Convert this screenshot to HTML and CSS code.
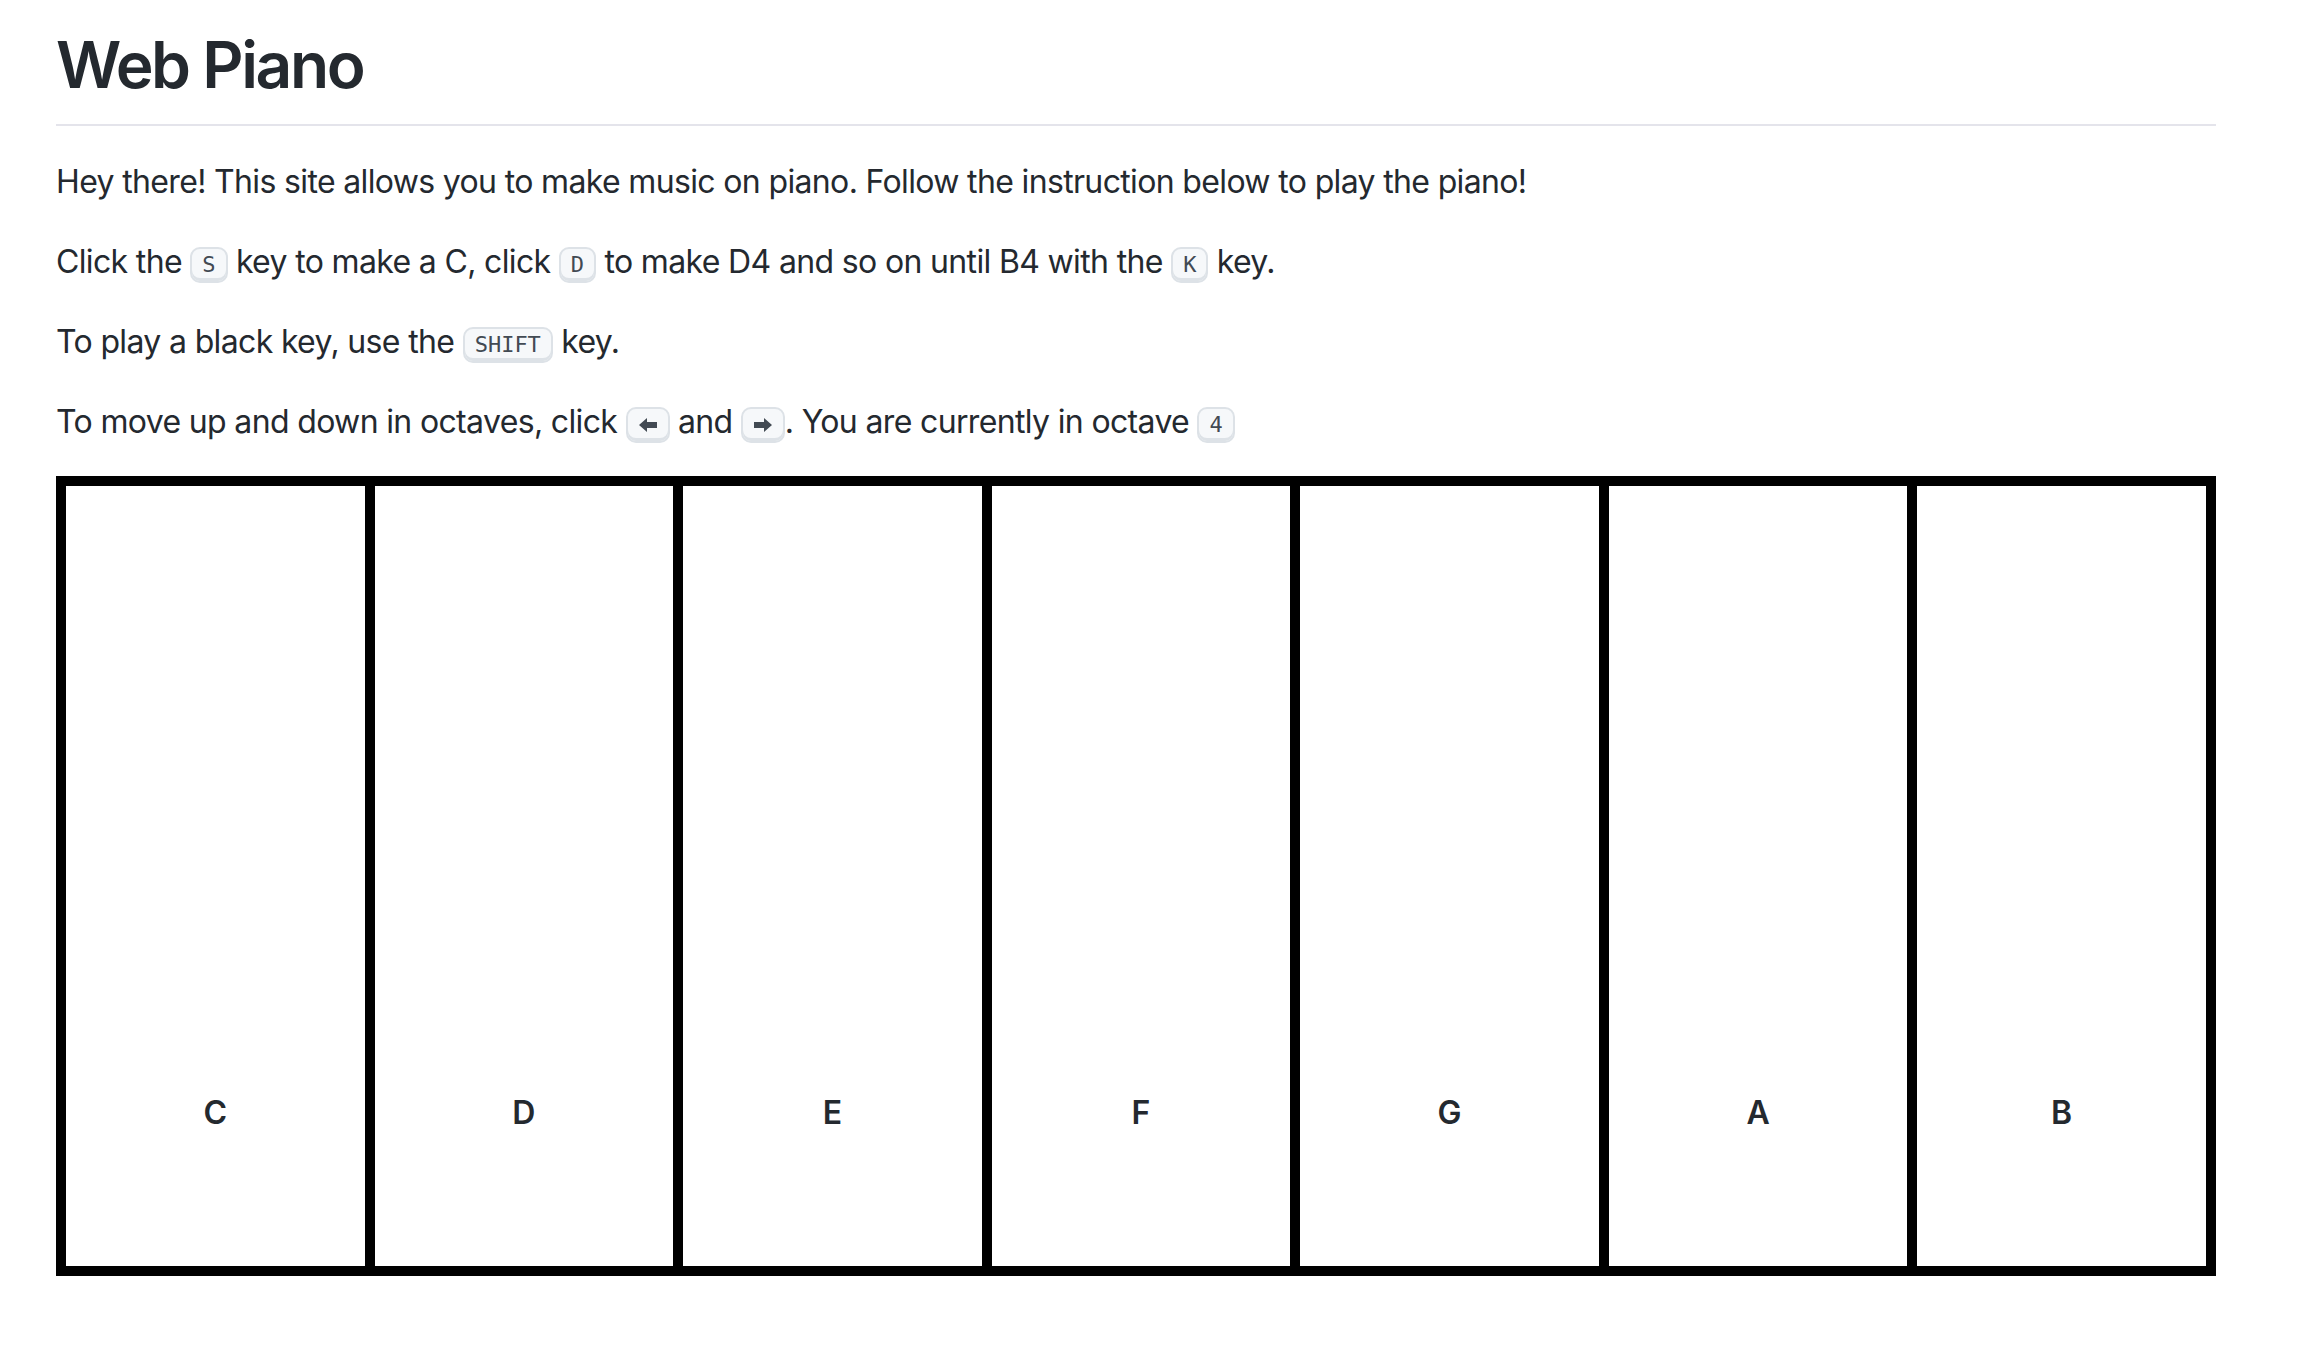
FILE: index.html
```html
<!DOCTYPE html>
<html lang="en">
<head>
<meta charset="utf-8">
<title>Web Piano</title>
<link rel="stylesheet" href="styles.css">
</head>
<body>
<main class="page">
  <h1 class="title">Web Piano</h1>
  <p class="para">Hey there! This site allows you to make music on piano. Follow the instruction below to play the piano!</p>
  <p class="para">Click the <kbd class="kbd">S</kbd> key to make a C, click <kbd class="kbd">D</kbd> to make D4 and so on until B4 with the <kbd class="kbd">K</kbd> key.</p>
  <p class="para">To play a black key, use the <kbd class="kbd">SHIFT</kbd> key.</p>
  <p class="para para-last">To move up and down in octaves, click <kbd class="kbd kbd-icon"><svg class="arrow" viewBox="0 0 22 20" width="22" height="20"><path d="M2 10 L10 3 L10 7 L20 7 L20 13 L10 13 L10 17 Z"/></svg></kbd> and <kbd class="kbd kbd-icon"><svg class="arrow" viewBox="0 0 22 20" width="22" height="20"><path d="M20 10 L12 3 L12 7 L2 7 L2 13 L12 13 L12 17 Z"/></svg></kbd>. You are currently in octave <kbd class="kbd">4</kbd></p>
  <div class="piano">
    <div class="key"><span class="label">C</span></div>
    <div class="key"><span class="label">D</span></div>
    <div class="key"><span class="label">E</span></div>
    <div class="key"><span class="label">F</span></div>
    <div class="key"><span class="label">G</span></div>
    <div class="key"><span class="label">A</span></div>
    <div class="key key-last"><span class="label">B</span></div>
  </div>
</main>
</body>
</html>
```
FILE: styles.css
```css
html, body {
  margin: 0;
  padding: 0;
  background: #ffffff;
}

body {
  font-family: Inter, "Liberation Sans", Arial, sans-serif;
  font-size: 32px;
  line-height: 48px;
  color: #24292f;
  letter-spacing: -0.65px;
}

.page {
  padding: 25px 82px 40px 56px;
}

.title {
  margin: 0 0 32px 0;
  font-size: 64px;
  line-height: 80px;
  font-weight: 600;
  padding-bottom: 19px;
  border-bottom: 2px solid #e4e4eb;
  letter-spacing: -2.4px;
}

.para {
  margin: 0 0 32px 0;
}

.para-last {
  margin-bottom: 30px;
}

.kbd {
  display: inline-block;
  font-family: "DejaVu Sans Mono", "Liberation Mono", monospace;
  font-size: 22px;
  line-height: 20px;
  letter-spacing: 0;
  padding: 6px 10px;
  color: #424a53;
  background: #f6f8fa;
  border: 2px solid #dde2e7;
  border-radius: 10px;
  box-shadow: inset 0 -3px 0 #dde2e7;
  vertical-align: middle;
  position: relative;
  top: 1px;
}

.kbd-icon {
  padding: 6px 9px;
}

.arrow {
  display: block;
  width: 22px;
  height: 20px;
  fill: #424a53;
}

.piano {
  display: flex;
  height: 800px;
}

.key {
  box-sizing: border-box;
  width: calc(100% / 7);
  border-top: 10px solid #000;
  border-bottom: 10px solid #000;
  border-left: 10px solid #000;
  display: flex;
  flex-direction: column;
  justify-content: flex-end;
  align-items: center;
  padding-bottom: 129px;
}

.key-last {
  border-right: 10px solid #000;
}

.label {
  font-weight: 600;
  font-size: 32px;
  line-height: 48px;
  color: #24292f;
  letter-spacing: 0;
}
```
